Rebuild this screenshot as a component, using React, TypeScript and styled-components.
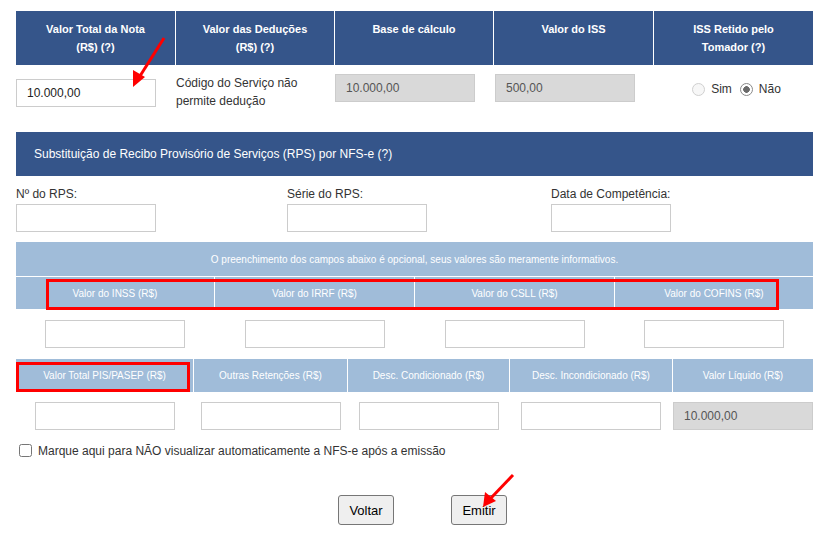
import React from "react";
import styled, { createGlobalStyle } from "styled-components";

const Global = createGlobalStyle`
  html, body { margin: 0; padding: 0; background: #fff; }
  body { font-family: "Liberation Sans", Arial, sans-serif; color: #333; }
  * { box-sizing: border-box; }
`;

const Page = styled.div`
  position: relative;
  width: 824px;
  height: 548px;
  padding: 11px 0 0 16px;
  overflow: hidden;
`;

const Content = styled.div`
  width: 797px;
`;

const TopHeader = styled.div`
  display: grid;
  grid-template-columns: 159px 158px 158px 159px 159px;
  gap: 1px;
  background: #fff;
`;

const HeadCell = styled.div`
  background: #35558a;
  color: #fff;
  font-weight: bold;
  font-size: 11px;
  line-height: 18px;
  text-align: center;
  height: 54px;
  padding-top: 9px;
`;

const TopBody = styled.div`
  display: grid;
  grid-template-columns: 159px 158px 158px 159px 159px;
  column-gap: 1px;
  align-items: start;
  height: 67px;
  padding-top: 9px;
`;

const Input = styled.input<{ $w?: number; $top?: number }>`
  display: block;
  width: ${(p) => p.$w ?? 140}px;
  height: 28px;
  margin-top: ${(p) => p.$top ?? 0}px;
  border: 1px solid #ccc;
  background: ${(p) => (p.readOnly ? "#d9d9d9" : "#fff")};
  color: ${(p) => (p.readOnly ? "#555" : "#222")};
  font-family: "Liberation Sans", Arial, sans-serif;
  font-size: 12px;
  padding: 0 10px;
  outline: none;
  border-radius: 0;
`;

const Note = styled.div`
  font-size: 12px;
  line-height: 18px;
  color: #333;
`;

const RadioGroup = styled.div`
  display: flex;
  align-items: center;
  justify-content: center;
  padding-top: 8px;
  padding-left: 14px;
  font-size: 12px;
  color: #333;
`;

const RadioLabel = styled.label`
  display: inline-flex;
  align-items: center;
  gap: 6px;
  margin-right: 8px;
`;

const Radio = styled.input`
  appearance: none;
  width: 13px;
  height: 13px;
  margin: 0;
  border-radius: 50%;
  border: 1px solid ${(p) => (p.checked ? "#8a8a8a" : "#d0d0d0")};
  background: ${(p) =>
    p.checked
      ? "radial-gradient(circle, #6b6b6b 0 3px, #fff 3.6px)"
      : "#f7f7f7"};
`;

const SectionBar = styled.div`
  background: #35558a;
  color: #fff;
  height: 44px;
  display: flex;
  align-items: center;
  padding-left: 18px;
  font-size: 12px;
`;

const RpsGrid = styled.div`
  display: grid;
  grid-template-columns: 271px 264px 1fr;
  margin-top: 11px;
`;

const Field = styled.div`
  display: flex;
  flex-direction: column;
`;

const Label = styled.label`
  font-size: 12px;
  line-height: 14px;
  margin-bottom: 3px;
  color: #333;
`;

const InfoLine = styled.div`
  margin-top: 10px;
  background: #a0bcd9;
  color: #fff;
  font-size: 10px;
  height: 35px;
  display: flex;
  align-items: center;
  justify-content: center;
  border-bottom: 1px solid #fff;
`;

const LightRow = styled.div<{ $cols: string; $h: number; $top?: number }>`
  display: grid;
  grid-template-columns: ${(p) => p.$cols};
  gap: 1px;
  background: #fff;
  height: ${(p) => p.$h}px;
  margin-top: ${(p) => p.$top ?? 0}px;
`;

const LightCell = styled.div`
  background: #a0bcd9;
  color: #fff;
  font-size: 10px;
  display: flex;
  align-items: center;
  justify-content: center;
`;

const InputRow = styled.div<{ $cols: string; $top: number }>`
  display: grid;
  grid-template-columns: ${(p) => p.$cols};
  gap: 1px;
  padding-top: ${(p) => p.$top}px;
  justify-items: center;
`;

const CheckRow = styled.label`
  display: flex;
  align-items: center;
  gap: 6px;
  margin-top: 14px;
  padding-left: 3px;
  font-size: 12px;
  color: #333;
  height: 13px;
`;

const Check = styled.input`
  width: 13px;
  height: 13px;
  margin: 0;
`;

const Buttons = styled.div`
  display: flex;
  justify-content: center;
  gap: 57px;
  margin-top: 38px;
  padding-left: 16px;
`;

const Button = styled.button`
  width: 56px;
  height: 30px;
  background: #efefef;
  border: 1px solid #767676;
  border-radius: 3px;
  font-family: "Liberation Sans", Arial, sans-serif;
  font-size: 13px;
  color: #000;
  padding: 0;
`;

const Overlay = styled.svg`
  position: absolute;
  left: 0;
  top: 0;
  pointer-events: none;
`;

const row1Cols = "198px 199px 199px 198px";
const row2Cols = "177px 153px 161px 162px 140px";

export default function App() {
  return (
    <Page>
      <Global />
      <Content>
        <TopHeader>
          <HeadCell>Valor Total da Nota<br />(R$) (?)</HeadCell>
          <HeadCell>Valor das Deduções<br />(R$) (?)</HeadCell>
          <HeadCell>Base de cálculo</HeadCell>
          <HeadCell>Valor do ISS</HeadCell>
          <HeadCell>ISS Retido pelo<br />Tomador (?)</HeadCell>
        </TopHeader>
        <TopBody>
          <Input defaultValue="10.000,00" $top={5} />
          <Note>Código do Serviço não<br />permite dedução</Note>
          <Input readOnly value="10.000,00" />
          <Input readOnly value="500,00" style={{ marginLeft: 1 }} />
          <RadioGroup>
            <RadioLabel><Radio type="radio" name="iss" disabled checked={false} readOnly />Sim</RadioLabel>
            <RadioLabel><Radio type="radio" name="iss" disabled checked readOnly />Não</RadioLabel>
          </RadioGroup>
        </TopBody>

        <SectionBar>Substituição de Recibo Provisório de Serviços (RPS) por NFS-e (?)</SectionBar>

        <RpsGrid>
          <Field>
            <Label>Nº do RPS:</Label>
            <Input />
          </Field>
          <Field>
            <Label>Série do RPS:</Label>
            <Input />
          </Field>
          <Field>
            <Label>Data de Competência:</Label>
            <Input $w={120} />
          </Field>
        </RpsGrid>

        <InfoLine>O preenchimento dos campos abaixo é opcional, seus valores são meramente informativos.</InfoLine>
        <LightRow $cols={row1Cols} $h={32}>
          <LightCell>Valor do INSS (R$)</LightCell>
          <LightCell>Valor do IRRF (R$)</LightCell>
          <LightCell>Valor do CSLL (R$)</LightCell>
          <LightCell>Valor do COFINS (R$)</LightCell>
        </LightRow>
        <InputRow $cols={row1Cols} $top={11}>
          <Input />
          <Input />
          <Input />
          <Input />
        </InputRow>

        <LightRow $cols={row2Cols} $h={33} $top={11}>
          <LightCell>Valor Total PIS/PASEP (R$)</LightCell>
          <LightCell>Outras Retenções (R$)</LightCell>
          <LightCell>Desc. Condicionado (R$)</LightCell>
          <LightCell>Desc. Incondicionado (R$)</LightCell>
          <LightCell>Valor Líquido (R$)</LightCell>
        </LightRow>
        <InputRow $cols={row2Cols} $top={10}>
          <Input />
          <Input />
          <Input />
          <Input />
          <Input readOnly value="10.000,00" />
        </InputRow>

        <CheckRow>
          <Check type="checkbox" />
          Marque aqui para NÃO visualizar automaticamente a NFS-e após a emissão
        </CheckRow>

        <Buttons>
          <Button>Voltar</Button>
          <Button>Emitir</Button>
        </Buttons>
      </Content>

      <Overlay width="824" height="548" viewBox="0 0 824 548">
        <rect x="47.5" y="280.5" width="730" height="28" fill="none" stroke="#ff0000" strokeWidth="3" />
        <rect x="17.5" y="363.5" width="171" height="27" fill="none" stroke="#ff0000" strokeWidth="3" />
        <line x1="164" y1="38" x2="140" y2="76" stroke="#ff0000" strokeWidth="3" />
        <polygon points="133,87 133,70 145,77" fill="#ff0000" />
        <line x1="513" y1="475" x2="491" y2="498" stroke="#ff0000" strokeWidth="3" />
        <polygon points="483,507 485,492 496,501" fill="#ff0000" />
      </Overlay>
    </Page>
  );
}
